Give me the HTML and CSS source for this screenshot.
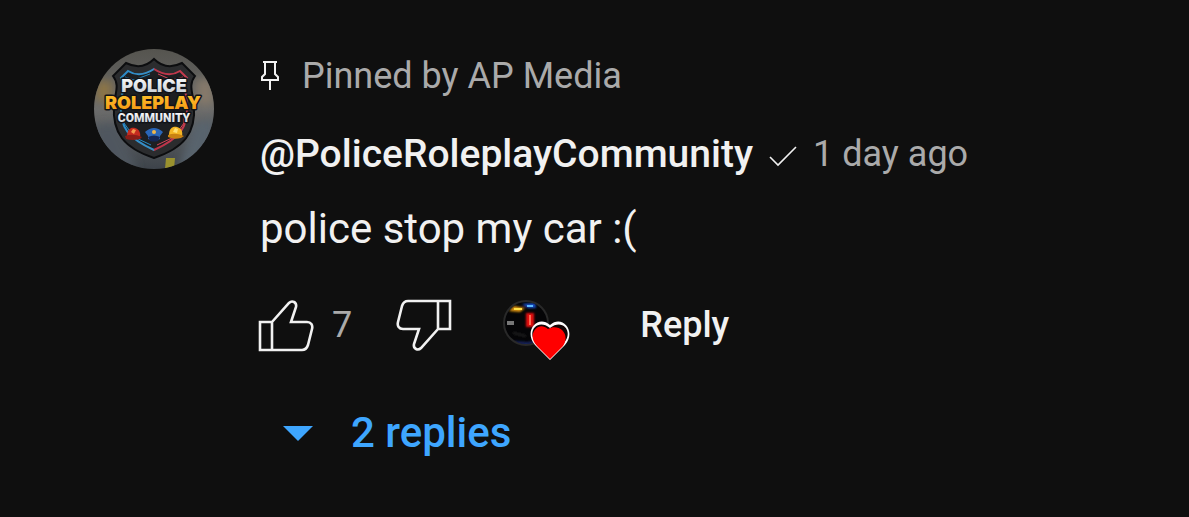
FILE: index.html
```html
<!DOCTYPE html>
<html lang="en">
<head>
    <meta charset="UTF-8">
    <meta name="viewport" content="width=device-width, initial-scale=1.0">
    <title>Pinned comment</title>
    <link rel="stylesheet" href="styles.css">
</head>
<body>
    <article class="comment">
        <!-- Channel avatar -->
        <svg class="avatar" viewBox="0 0 120 120" role="img" aria-label="Police Roleplay Community">
            <defs>
                <clipPath id="avatarClip"><circle cx="60" cy="60" r="60"/></clipPath>
                <linearGradient id="street" x1="0" y1="0" x2="0" y2="1">
                    <stop offset="0" stop-color="#55544f"/>
                    <stop offset="0.5" stop-color="#6c6c6b"/>
                    <stop offset="1" stop-color="#3d434a"/>
                </linearGradient>
                <linearGradient id="rim" x1="0" y1="0" x2="1" y2="0">
                    <stop offset="0" stop-color="#2a8bc9"/>
                    <stop offset="0.49" stop-color="#3a8fc4"/>
                    <stop offset="0.51" stop-color="#b83248"/>
                    <stop offset="1" stop-color="#c63b4e"/>
                </linearGradient>
                <linearGradient id="silver" x1="0" y1="0" x2="0" y2="1">
                    <stop offset="0" stop-color="#ffffff"/>
                    <stop offset="1" stop-color="#c3cbd3"/>
                </linearGradient>
                <linearGradient id="gold" x1="0" y1="0" x2="0" y2="1">
                    <stop offset="0" stop-color="#ffc62e"/>
                    <stop offset="1" stop-color="#f59412"/>
                </linearGradient>
                <filter id="soft"><feGaussianBlur stdDeviation="4"/></filter>
            </defs>
            <g clip-path="url(#avatarClip)">
                <rect width="120" height="120" fill="url(#street)"/>
                <g filter="url(#soft)">
                    <rect x="2" y="32" width="16" height="20" fill="#8c7547"/>
                    <rect x="102" y="30" width="18" height="26" fill="#85796a"/>
                    <path d="M0 76L22 74L44 120H0Z" fill="#50575f"/>
                    <path d="M100 74L120 70V120H84Z" fill="#59636d"/>
                </g>
                <path d="M72 109H81L80 120H71Z" fill="#99912e"/>
                <path d="M60 10C52 18 42 19 32 14L19 27C26 36 21 44 20 56C18 84 30 99 60 109C90 99 102 84 100 56C99 44 94 36 101 27L88 14C78 19 68 18 60 10Z" fill="#2b2c2e" stroke="#0c0d0f" stroke-width="2"/>
                <path d="M60 20C51 26 42 27 34 22L27 29C32 38 27 45 27 56C26 79 34 89 60 101C86 89 94 79 93 56C93 45 88 38 93 29L86 22C78 27 69 26 60 20Z" fill="#1d1f22" stroke="url(#rim)" stroke-width="2"/>
                <path d="M31 28L40 31L56 25M30 66V74L40 88L57 96" fill="none" stroke="#258bc2" stroke-width="1"/>
                <path d="M64 25L78 31L89 28M90 66V74L80 88L63 96" fill="none" stroke="#d44658" stroke-width="1"/>
                <g class="logo-text">
                    <text class="logo-police" x="60" y="43">POLICE</text>
                    <text class="logo-roleplay" x="59" y="60">ROLEPLAY</text>
                    <text class="logo-community" x="60" y="73">COMMUNITY</text>
                </g>
                <!-- Helmets and police cap -->
                <path d="M33 88C33 80 37 78 41 79C45 80 47 84 46 88Q39 91 33 88Z" fill="#c52b20"/>
                <path d="M31 87Q39 84 48 88L46 90Q38 92 32 90Z" fill="#8a1d17"/>
                <path d="M39 80L42 81L40 85L37 83Z" fill="#f39a4f"/>
                <path d="M51 83Q60 75 69 83L66 87V90Q60 93 54 90V87Z" fill="#2a66b8"/>
                <path d="M54 88Q60 85 66 88L64 92Q60 93 56 92Z" fill="#142654"/>
                <circle cx="60" cy="83" r="2" fill="#f0b74b"/>
                <path d="M75 86C75 79 79 77 83 78C87 79 89 82 88 87Q81 90 75 86Z" fill="#f4b624"/>
                <path d="M74 86Q81 83 90 87L87 89Q80 91 74 88Z" fill="#c98212"/>
                <path d="M81 79L84 80L83 84L79 83Z" fill="#ffe174"/>
            </g>
        </svg>

        <div class="comment-main">
            <div class="pinned">
                <svg class="pin-icon" viewBox="0 0 20 32" aria-hidden="true">
                    <path d="M3 2H17M5 2V14L2 17V20H18V17L15 14V2M10 20V30" fill="none" stroke="currentColor" stroke-width="2"/>
                </svg>
                <span>Pinned by AP Media</span>
            </div>

            <div class="author-row">
                <a class="author" href="#channel">@PoliceRoleplayCommunity</a>
                <svg class="check-icon" viewBox="0 0 28 28" role="img" aria-label="Verified">
                    <path d="M1 17L9 25L27 7" fill="none" stroke="currentColor" stroke-width="1.6"/>
                </svg>
                <a class="time" href="#comment">1 day ago</a>
            </div>

            <p class="comment-text">police stop my car :(</p>

            <div class="actions">
                <button class="btn like" type="button" aria-label="Like">
                    <svg class="thumb-icon" viewBox="0 0 56 56" aria-hidden="true">
                        <path d="M2 25H14V53H2ZM14 25L31 6C34 3 39 5 38 10L33 25H49C53 25 55 28 54 32L50 48C49 51 47 53 44 53H14" fill="none" stroke="currentColor" stroke-width="2.6"/>
                    </svg>
                    <span class="like-count">7</span>
                </button>
                <button class="btn dislike" type="button" aria-label="Dislike">
                    <svg class="thumb-icon" viewBox="0 0 56 56" aria-hidden="true">
                        <path d="M54 32H42V4H54ZM42 32L25 51C22 54 17 52 18 47L23 32H7C3 32 1 29 2 25L6 9C7 6 9 4 12 4H42" fill="none" stroke="currentColor" stroke-width="2.6"/>
                    </svg>
                </button>
                <button class="btn creator-heart" type="button" aria-label="Liked by AP Media">
                    <svg class="heart-icon" viewBox="0 0 68 72" aria-hidden="true">
                        <defs>
                            <clipPath id="creatorClip"><circle cx="24" cy="34" r="21"/></clipPath>
                            <filter id="glow"><feGaussianBlur stdDeviation="1"/></filter>
                        </defs>
                        <circle cx="24" cy="34" r="22" fill="#050507" stroke="#292929" stroke-width="2"/>
                        <g clip-path="url(#creatorClip)">
                            <g filter="url(#glow)">
                                <path d="M7 22L12 17L23 19L18 23Z" fill="#e0950f"/>
                                <path d="M20 15L33 14L34 19L26 19Z" fill="#174ec9"/>
                                <rect x="24" y="24" width="8" height="14" fill="#e30d0d"/>
                                <path d="M12 52L25 53L40 51V57H12Z" fill="#17245b"/>
                                <path d="M11 44L24 47" stroke="#202020" stroke-width="2"/>
                            </g>
                            <path d="M12 20L20 20" stroke="#ffdf45" stroke-width="2"/>
                            <path d="M25 17L31 17" stroke="#5cbaff" stroke-width="2"/>
                            <path d="M28 26V36" stroke="#ff6952" stroke-width="2"/>
                            <rect x="5" y="32" width="7" height="4" fill="#777"/>
                        </g>
                        <path d="M48 71L33 56C21 42 36 25 48 36C60 25 75 42 63 56Z" fill="#fff"/>
                        <path d="M48 68L34 54C24 42 36 29 48 39C60 29 72 42 62 54Z" fill="#140606"/>
                        <path d="M48 70L35 57C24 46 36 31 46 40C57 34 69 45 61 57Z" fill="#f00"/>
                    </svg>
                </button>
                <button class="btn reply" type="button">Reply</button>
            </div>

            <button class="btn replies" type="button">
                <svg class="arrow-icon" viewBox="0 0 30 16" aria-hidden="true">
                    <path d="M0 1H30L15 16Z" fill="currentColor"/>
                </svg>
                <span>2 replies</span>
            </button>
        </div>
    </article>
</body>
</html>
```

FILE: styles.css
```css
* { margin: 0; padding: 0; box-sizing: border-box; }

body {
    font-family: Roboto, Arial, sans-serif;
    background: #0f0f0f;
    color: #f1f1f1;
    min-height: 100vh;
}

a { color: inherit; text-decoration: none; }

svg { display: block; flex-shrink: 0; }

.comment {
    display: flex;
    align-items: flex-start;
    gap: 44px;
    padding: 49px 94px 40px;
}

.avatar {
    width: 120px;
    height: 120px;
}

.logo-text {
    font-family: Inter, Roboto, sans-serif;
    font-weight: 900;
    text-anchor: middle;
    paint-order: stroke;
    stroke: #111318;
    stroke-width: 3px;
    stroke-linejoin: round;
}

.logo-police {
    font-size: 18px;
    fill: url(#silver);
}

.logo-roleplay {
    font-size: 18px;
    fill: url(#gold);
}

.logo-community {
    font-family: Roboto, sans-serif;
    font-size: 12px;
    fill: url(#silver);
}

.comment-main {
    flex: 1;
    min-width: 0;
}

.pinned,
.author-row,
.comment-text {
    padding-left: 2px;
}

.pinned {
    display: flex;
    align-items: center;
    gap: 22px;
    font-size: 36px;
    line-height: 54px;
    color: #aaa;
}

.pin-icon {
    width: 20px;
    height: 32px;
    color: #f1f1f1;
}

.author-row {
    display: flex;
    align-items: center;
    gap: 16px;
    margin-top: 24px;
    line-height: 54px;
}

.author {
    font-size: 39px;
    font-weight: 500;
}

.check-icon {
    width: 28px;
    height: 28px;
}

.time {
    font-size: 36px;
    color: #aaa;
}

.comment-text {
    margin-top: 18px;
    font-size: 42px;
    line-height: 60px;
}

.actions {
    display: flex;
    align-items: center;
    margin-top: 30px;
    height: 72px;
}

.btn {
    display: flex;
    align-items: center;
    background: none;
    border: none;
    color: inherit;
    font-family: inherit;
    cursor: pointer;
}

.thumb-icon {
    width: 56px;
    height: 56px;
}

.like { gap: 18px; }

.like-count {
    font-size: 36px;
    line-height: 54px;
    color: #aaa;
}

.dislike { margin-left: 44px; }

.creator-heart { margin-left: 50px; }

.heart-icon {
    width: 68px;
    height: 72px;
}

.reply {
    margin-left: 70px;
    font-size: 36px;
    font-weight: 500;
}

.replies {
    gap: 38px;
    margin-top: 42px;
    padding-left: 25px;
    font-size: 42px;
    font-weight: 500;
    line-height: 60px;
    color: #3ea6ff;
}

.arrow-icon {
    width: 30px;
    height: 16px;
}
```
